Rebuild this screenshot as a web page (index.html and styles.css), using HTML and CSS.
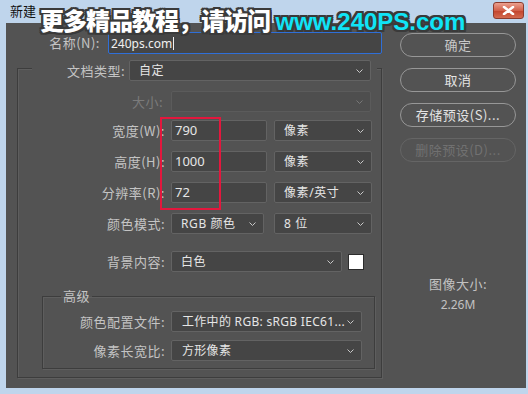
FILE: index.html
```html
<!DOCTYPE html>
<html lang="zh">
<head>
    <meta charset="UTF-8">
    <title>新建</title>
    <link rel="stylesheet" href="styles.css">
</head>
<body>
    <div class="titlebar">
        <span class="title">新建</span>
        <span class="close">
            <svg width="13" height="9" viewBox="0 0 13 9"><path d="M2 1 L11 8 M11 1 L2 8" stroke="#fff" stroke-width="2.6" stroke-linecap="round"/></svg>
        </span>
    </div>

    <div class="dialog">
        <div class="form">
            <div class="name-row">
                <label class="name-label">名称(N):</label>
                <div class="field field-focus">240ps.com<span class="caret"></span></div>
            </div>

            <div class="group">
                <div class="group-head">
                    <label class="head-label">文档类型:</label>
                    <div class="select select-doc">自定<svg class="chev" width="7" height="4" viewBox="0 0 7 4"><polyline points="0.5,0.5 3.5,3.5 6.5,0.5" fill="none" stroke="#c8c8c8"/></svg></div>
                </div>

                <div class="row row-size">
                    <label class="dim">大小:</label>
                    <div class="select select-wide disabled"><svg class="chev" width="7" height="4" viewBox="0 0 7 4"><polyline points="0.5,0.5 3.5,3.5 6.5,0.5" fill="none" stroke="#777"/></svg></div>
                </div>

                <div class="row row-w">
                    <label>宽度(W):</label>
                    <div class="field field-num">790</div>
                    <div class="select select-unit">像素<svg class="chev" width="7" height="4" viewBox="0 0 7 4"><polyline points="0.5,0.5 3.5,3.5 6.5,0.5" fill="none" stroke="#c8c8c8"/></svg></div>
                </div>

                <div class="row">
                    <label>高度(H):</label>
                    <div class="field field-num">1000</div>
                    <div class="select select-unit">像素<svg class="chev" width="7" height="4" viewBox="0 0 7 4"><polyline points="0.5,0.5 3.5,3.5 6.5,0.5" fill="none" stroke="#c8c8c8"/></svg></div>
                </div>

                <div class="row">
                    <label>分辨率(R):</label>
                    <div class="field field-num">72</div>
                    <div class="select select-unit">像素/英寸<svg class="chev" width="7" height="4" viewBox="0 0 7 4"><polyline points="0.5,0.5 3.5,3.5 6.5,0.5" fill="none" stroke="#c8c8c8"/></svg></div>
                </div>

                <div class="row">
                    <label>颜色模式:</label>
                    <div class="select select-mode">RGB 颜色<svg class="chev" width="7" height="4" viewBox="0 0 7 4"><polyline points="0.5,0.5 3.5,3.5 6.5,0.5" fill="none" stroke="#c8c8c8"/></svg></div>
                    <div class="select select-unit">8 位<svg class="chev" width="7" height="4" viewBox="0 0 7 4"><polyline points="0.5,0.5 3.5,3.5 6.5,0.5" fill="none" stroke="#c8c8c8"/></svg></div>
                </div>

                <div class="row row-bg">
                    <label>背景内容:</label>
                    <div class="select select-bg">白色<svg class="chev" width="7" height="4" viewBox="0 0 7 4"><polyline points="0.5,0.5 3.5,3.5 6.5,0.5" fill="none" stroke="#c8c8c8"/></svg></div>
                    <span class="swatch"></span>
                </div>

                <fieldset class="advanced">
                    <legend>高级</legend>
                    <div class="row row-adv">
                        <label>颜色配置文件:</label>
                        <div class="select select-adv">工作中的 RGB: sRGB IEC61...<svg class="chev" width="7" height="4" viewBox="0 0 7 4"><polyline points="0.5,0.5 3.5,3.5 6.5,0.5" fill="none" stroke="#c8c8c8"/></svg></div>
                    </div>
                    <div class="row row-adv row-aspect">
                        <label>像素长宽比:</label>
                        <div class="select select-adv">方形像素<svg class="chev" width="7" height="4" viewBox="0 0 7 4"><polyline points="0.5,0.5 3.5,3.5 6.5,0.5" fill="none" stroke="#c8c8c8"/></svg></div>
                    </div>
                </fieldset>
            </div>
        </div>

        <div class="side">
            <button class="btn btn-ok">确定</button>
            <button class="btn">取消</button>
            <button class="btn">存储预设(S)...</button>
            <button class="btn btn-disabled">删除预设(D)...</button>

            <div class="size-info">
                <div class="size-label">图像大小:</div>
                <div class="size-value">2.26M</div>
            </div>
        </div>
    </div>

    <!-- annotation over the number fields -->
    <div class="mark"></div>

    <div class="watermark"><span class="zh">更多精品教程，请访问</span> <span class="url">www.240PS.com</span></div>
</body>
</html>
```

FILE: styles.css
```css
body {
    margin: 0;
    width: 528px;
    height: 394px;
    overflow: hidden;
    position: relative;
    background-color: #bfd5ec;
    font-family: "Noto Sans", "Noto Sans CJK SC", sans-serif;
}

.titlebar {
    height: 23px;
    display: flex;
    align-items: flex-start;
    justify-content: space-between;
}

.title {
    margin: 3px 0 0 10px;
    font-family: "Noto Sans CJK SC", sans-serif;
    font-size: 13px;
    line-height: 16px;
    color: #111;
}

.close {
    margin: 2px 4px 0 0;
    width: 31px;
    height: 17px;
    box-sizing: border-box;
    border: 1px solid #8c3b2e;
    border-radius: 3px;
    background: linear-gradient(#eba08f, #d2604a 50%, #c2432c 51%, #d36a50);
    display: flex;
    align-items: center;
    justify-content: center;
}

.dialog {
    margin: 0 2px 0 6px;
    height: 365px;
    background-color: #535353;
    display: flex;
}

.form {
    width: 376px;
    padding: 9px 0 0 11px;
    box-sizing: border-box;
}

label {
    font-family: "Noto Sans CJK SC", sans-serif;
    font-size: 13px;
    letter-spacing: 0.5px;
    color: #c4c4c4;
    text-align: right;
    line-height: 21px;
}

label.dim {
    color: #7b7b7b;
}

.name-row {
    display: flex;
    gap: 8px;
    height: 22px;
}

.name-label {
    width: 83px;
    line-height: 22px;
}

.field,
.select {
    height: 21px;
    box-sizing: border-box;
    border: 1px solid #636363;
    border-radius: 2px;
    background-color: #454545;
    color: #e6e6e6;
    font-size: 12px;
    line-height: 19px;
    display: flex;
    align-items: center;
}

.field {
    padding-left: 3px;
}

.field-focus {
    width: 274px;
    height: 22px;
    border-color: #2f6fd8;
    padding-left: 2px;
    color: #f0f0f0;
}

.caret {
    width: 1px;
    height: 13px;
    margin-left: 1px;
    background-color: #f0f0f0;
}

.field-num {
    width: 96px;
    font-size: 13px;
}

.select {
    padding-left: 9px;
    justify-content: space-between;
    letter-spacing: 0.6px;
}

.chev {
    margin-right: 7px;
    flex-shrink: 0;
}

.select.disabled {
    border-color: #5b5b5b;
    background-color: #4e4e4e;
    justify-content: flex-end;
}

.group {
    margin-top: 14px;
    width: 365px;
    box-sizing: border-box;
    border: 1px solid #3d3d3d;
    box-shadow: 1px 1px 0 #5e5e5e, inset 1px 1px 0 #5e5e5e;
    padding-bottom: 8px;
}

.group-head {
    margin: -9px 4px 0 14px;
    display: flex;
    gap: 4px;
    background-color: #535353;
}

.head-label {
    width: 93px;
}

.select-doc {
    width: 242px;
}

.row {
    display: flex;
    gap: 6px;
    margin-top: 10px;
}

.row label {
    width: 147px;
}

.row-size {
    margin-top: 10px;
}

.row-size label {
    width: 145px;
    padding-right: 2px;
}

.row-w {
    margin-top: 8px;
}

.select-wide {
    width: 200px;
}

.select-unit {
    width: 98px;
    margin-left: 1px;
}

.select-mode {
    width: 93px;
    margin-right: 3px;
}

.row-bg {
    margin-top: 17px;
    align-items: center;
}

.select-bg {
    width: 171px;
}

.swatch {
    width: 16px;
    height: 16px;
    box-sizing: border-box;
    background-color: #fff;
    border: 1px solid #2c2c2c;
}

.advanced {
    margin: 16px 0 0 24px;
    width: 333px;
    box-sizing: border-box;
    padding: 0 0 7px 0;
    border: 1px solid #3d3d3d;
    box-shadow: 1px 1px 0 #5e5e5e, inset 1px 1px 0 #5e5e5e;
    min-width: 0;
}

.advanced legend {
    margin-left: 18px;
    padding: 0 2px;
    font-family: "Noto Sans CJK SC", sans-serif;
    font-size: 13px;
    line-height: 16px;
    letter-spacing: 0.5px;
    color: #c4c4c4;
}

.row-adv {
    margin-top: 7px;
}

.row-adv label {
    width: 122px;
}

.row-aspect {
    margin-top: 8px;
}

.select-adv {
    width: 191px;
    padding-left: 10px;
    letter-spacing: 0.3px;
}

.side {
    width: 143px;
    padding: 10px 0 0 18px;
    box-sizing: border-box;
    display: flex;
    flex-direction: column;
}

.btn {
    width: 116px;
    height: 24px;
    margin-bottom: 11px;
    border: 1px solid #979797;
    border-radius: 12px;
    background-color: #535353;
    color: #e4e4e4;
    font-family: "Noto Sans CJK SC", sans-serif;
    font-size: 13px;
    letter-spacing: 0.5px;
    padding: 0;
    line-height: 22px;
}

.btn-ok {
    color: #c8c8c8;
}

.btn-disabled {
    border-color: #656565;
    color: #717171;
}

.size-info {
    width: 116px;
    margin-top: 103px;
    text-align: center;
    color: #c2c2c2;
}

.size-label {
    font-family: "Noto Sans CJK SC", sans-serif;
    font-size: 13px;
    letter-spacing: 0.5px;
    line-height: 16px;
}

.size-value {
    margin-top: 6px;
    font-size: 12px;
    line-height: 14px;
}

.mark {
    position: absolute;
    left: 160px;
    top: 117px;
    width: 61px;
    height: 93px;
    box-sizing: border-box;
    border: 2px solid #e3173d;
}

.watermark {
    position: absolute;
    left: 40px;
    top: 6px;
    font-family: "Noto Sans CJK SC", sans-serif;
    font-size: 24px;
    font-weight: 900;
    line-height: 28px;
    color: #fff;
    white-space: nowrap;
    text-shadow:
        2px 0 0 #3a3a3a, -2px 0 0 #3a3a3a, 0 2px 0 #3a3a3a, 0 -2px 0 #3a3a3a,
        2px 2px 0 #3a3a3a, -2px -2px 0 #3a3a3a, 2px -2px 0 #3a3a3a, -2px 2px 0 #3a3a3a;
}

.zh {
    letter-spacing: -1px;
}

.url {
    font-family: "Liberation Sans", sans-serif;
    font-weight: 700;
    color: #10e4f6;
}
```
